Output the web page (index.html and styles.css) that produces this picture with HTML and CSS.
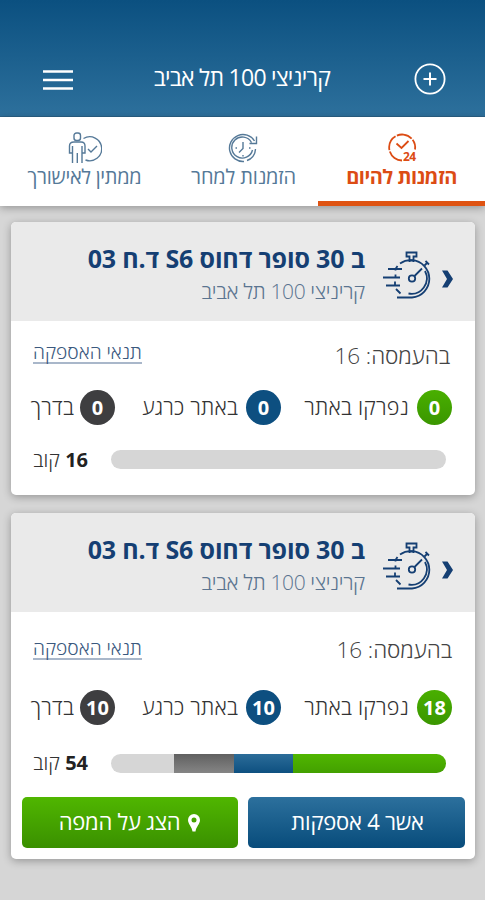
FILE: index.html
```html
<!DOCTYPE html>
<html lang="he" dir="rtl">
<head>
<meta charset="utf-8">
<title>קריניצי 100 תל אביב</title>
<link rel="stylesheet" href="styles.css">
</head>
<body>
<svg class="defs" width="0" height="0" aria-hidden="true">
  <symbol id="stopwatch" viewBox="0 0 50 48">
    <g fill="none" stroke="currentColor" stroke-width="1.8">
      <path d="M23.500 1.500h10v4h-3v4h-4v-4h-3zM26.500 9v2M30.500 9v2"/>
      <path d="M17 12.500A19.300 19.300 0 0 1 29 9.200 18.700 18.700 0 0 1 29 46.500H14M14.500 15l-2 3M13 38l4.500 4.500"/>
      <path d="M42 20A15.500 15.500 0 0 1 25.500 42.500"/>
      <path d="M42.500 10l3.500 3.500M41.500 14.500l3-3"/>
      <circle cx="29" cy="27.500" r="3.200"/>
      <path d="M31.500 25l7.500-7.500"/>
      <path d="M5 18h14M0 26.500h17M3 34.500h14M12.500 18v1.500M12.500 23.500v3M12 30.500v4"/>
    </g>
  </symbol>
</svg>
<header class="top">
  <svg class="add" width="32" height="32" viewBox="0 0 32 32" fill="none" stroke="#fff"><circle cx="16" cy="16" r="14.600" stroke-width="1.800"/><path d="M16 9.500v13M9.500 16h13" stroke-width="2"/></svg>
  <h1 class="top-title"><span>קריניצי 100 תל אביב</span></h1>
  <svg class="menu" width="30" height="22" viewBox="0 0 30 22"><path d="M0 3.500h30M0 12h30M0 20.500h30" stroke="#fff" stroke-width="2.400"/></svg>
</header>
<nav class="tabs">
  <a class="tab tab-today">
    <svg width="30" height="30" viewBox="0 0 30 30" fill="none" stroke="currentColor" stroke-width="1.800"><path d="M15 27.500A13 13 0 1 1 28 16.500" stroke-dasharray="16 1.500"/><path d="M9.500 10.500l5 4.500 7-7"/><text class="icon-text" x="16" y="27.500" direction="ltr" stroke="none" fill="currentColor">24</text></svg>
    <span>הזמנות להיום</span>
  </a>
  <a class="tab tab-tomorrow">
    <svg width="30" height="30" viewBox="0 0 30 30" fill="none" stroke="currentColor" stroke-width="1.400"><path d="M26.500 8A13.500 13.500 0 1 0 16 28.500M23.500 9.500A10.500 10.500 0 1 0 24.500 17M27.500 16A13 13 0 0 1 19 27.500M21.500 10.500h7V3.500"/><path d="M15 9v6.500l-4 4M7.500 15h1.500M15 22v1.500M21 15h1.500"/></svg>
    <span>הזמנות למחר</span>
  </a>
  <a class="tab tab-wait">
    <svg width="34" height="32" viewBox="0 0 34 32" fill="none" stroke="currentColor" stroke-width="1.400"><rect x="6" y="1" width="6.500" height="7.500" rx="2.500"/><path d="M4 21H1.500v-7c0-3 2-4 4.500-4h7c2.500 0 4 1 4 4v7h-3M4.500 14v17M9.300 21v10M14 14v17"/><path d="M15.500 6.500A12 12 0 1 1 17.500 28M20 17l3 3 6-6"/></svg>
    <span>ממתין לאישורך</span>
  </a>
</nav>
<main class="orders">
  <section class="card">
    <div class="card-head">
      <svg class="chevron" width="11" height="18" viewBox="0 0 11 18"><path d="M0 .5h5.500L11 9l-5.500 8.500H0L5 9z" fill="currentColor"/></svg>
      <svg class="watch" width="50" height="48"><use href="#stopwatch"/></svg>
      <div class="names"><h2><span>ב 30 סופר דחוס S6 ד.ח 03</span></h2><p><span>קריניצי 100 תל אביב</span></p></div>
    </div>
    <div class="info"><span class="load">בהעמסה: 16</span><a class="terms">תנאי האספקה</a></div>
    <div class="stats">
      <b class="dot green">0</b><span class="s1">נפרקו באתר</span>
      <b class="dot blue">0</b><span class="s2">באתר כרגע</span>
      <b class="dot gray">0</b><span class="s3">בדרך</span>
    </div>
    <div class="progress"><div class="bar"></div><span class="amount"><b>16</b> קוב</span></div>
  </section>
  <section class="card card-active">
    <div class="card-head">
      <svg class="chevron" width="11" height="18" viewBox="0 0 11 18"><path d="M0 .5h5.500L11 9l-5.500 8.500H0L5 9z" fill="currentColor"/></svg>
      <svg class="watch" width="50" height="48"><use href="#stopwatch"/></svg>
      <div class="names"><h2><span>ב 30 סופר דחוס S6 ד.ח 03</span></h2><p><span>קריניצי 100 תל אביב</span></p></div>
    </div>
    <div class="info"><span class="load">בהעמסה: 16</span><a class="terms">תנאי האספקה</a></div>
    <div class="stats">
      <b class="dot green">18</b><span class="s1">נפרקו באתר</span>
      <b class="dot blue">10</b><span class="s2">באתר כרגע</span>
      <b class="dot gray">10</b><span class="s3">בדרך</span>
    </div>
    <div class="progress"><div class="bar"><i class="green" style="width:153px"></i><i class="blue" style="width:59px"></i><i class="gray" style="width:60px"></i></div><span class="amount"><b>54</b> קוב</span></div>
    <div class="actions">
      <button class="btn approve"><span>אשר 4 אספקות</span></button>
      <button class="btn map"><svg width="12" height="18" viewBox="0 0 12 18"><path fill="#fff" fill-rule="evenodd" d="M6 0a6 6 0 0 1 6 6c0 4-4 7-4.500 11.500h-3C4 13 0 10 0 6a6 6 0 0 1 6-6zm0 3.500a2.500 2.500 0 1 0 0 5 2.500 2.500 0 0 0 0-5z"/></svg><span>הצג על המפה</span></button>
    </div>
  </section>
</main>
</body>
</html>
```
FILE: styles.css
```css
* { box-sizing: border-box; }
body { margin: 0; height: 900px; overflow: hidden; background: #d6d6d6; font-family: "Open Sans", "Noto Sans", sans-serif; color: #444; }
h1, h2, p { margin: 0; }
span, a { white-space: nowrap; }
.defs { display: block; height: 0; }
.top { height: 117px; padding: 42px 39px 0 43px; display: flex; justify-content: space-between; align-items: center; background: linear-gradient(#0b5080, #2d709c); border-bottom: 1px solid #2a6187; color: #fff; }
.top svg { flex: none; }
.top-title { font-size: 23px; line-height: 30px; font-weight: 400; margin: -5px 0 0 -1px; letter-spacing: -.75px; padding-right: 2px; }
.tabs { height: 89px; display: grid; grid-template-columns: 167px 151px 167px; background: #fff; color: #557998; box-shadow: 0 2px 8px rgba(0,0,0,.3); }
.tab { display: flex; flex-direction: column; align-items: center; padding-top: 15px; font-size: 20px; line-height: 26px; }
.tab svg { height: 32px; flex: none; }
.tab-today { color: #dc4c14; font-weight: 700; letter-spacing: -.5px; border-bottom: 5px solid #df5312; }
.tab-tomorrow { letter-spacing: -.15px; padding-left: 1px; }
.tab-tomorrow span { margin-left: 1px; }
.tab-wait { letter-spacing: -.3px; padding-left: 2px; }
.icon-text { font: 700 12px "Open Sans", sans-serif; letter-spacing: -.5px; }
.orders { padding: 16px 10px 0 11px; }
.card { height: 273px; background: #fff; border-radius: 5px; overflow: hidden; box-shadow: 0 2px 8px rgba(0,0,0,.3); margin-bottom: 18px; }
.card-active { height: 346px; }
.card-head { height: 99px; padding: 22px 22px 0 0; display: flex; background: #eaeaea; color: #153f73; }
.chevron { margin-top: 26px; flex: none; }
.watch { margin: 7px 9px 0 18px; flex: none; }
h2 { font-size: 25px; line-height: 28px; font-weight: 700; letter-spacing: -.15px; }
.names p { font-size: 21px; line-height: 26px; margin-top: 6px; color: #5a7490; font-weight: 330; letter-spacing: -.36px; }
.info { height: 68px; padding: 20px 25px 0 22px; display: flex; justify-content: space-between; }
.load { font-size: 22.500px; line-height: 30px; font-weight: 330; letter-spacing: -.05px; }
.terms { font-size: 19.200px; line-height: 23px; height: 24px; margin-top: -1px; color: #3b597e; border-bottom: 2px solid #a9b7ca; font-weight: 300; }
.stats { height: 36px; padding-right: 23px; display: flex; align-items: center; font-size: 21.500px; font-weight: 300; color: #333; letter-spacing: .2px; }
.stats span { margin-top: -1px; }
.dot { width: 35px; height: 35px; border-radius: 50%; color: #fff; display: grid; place-items: center; font-size: 20px; font-weight: 700; flex: none; letter-spacing: 0; }
.dot.green { background: linear-gradient(#49af00, #3a9600); }
.dot.blue { background: #0d4f80; }
.dot.gray { background: #3e3e40; }
.s1 { width: 136px; padding-right: 8px; }
.s2 { width: 131px; padding-right: 8px; }
.s3 { padding-right: 6px; }
.progress { display: flex; align-items: center; padding: 25px 29px 0 0; height: 44px; }
.bar { width: 335px; height: 19px; border-radius: 10px; overflow: hidden; background: #d6d6d6; display: flex; flex: none; }
.bar i { display: block; }
.bar .green { background: linear-gradient(#50b600, #43a000); }
.bar .blue { background: linear-gradient(#2b6c99, #0e5080); }
.bar .gray { background: linear-gradient(#606060, #858585); }
.amount { font-size: 20px; line-height: 24px; margin-right: 23px; font-weight: 300; color: #333; }
.amount b { font-weight: 700; color: #222; }
.card-active .info { height: 77px; padding: 23px 23px 0 22px; }
.card-active .terms { margin-top: 1px; }
.card-active .progress { height: 48px; padding-top: 28px; }
.actions { display: grid; grid-template-columns: 217px 216px; gap: 10px; margin: 24px 10px 0 11px; }
.btn { height: 51px; border: 0; border-radius: 5px; padding: 0; color: #fff; font: 400 22px/30px "Open Sans", "Noto Sans", sans-serif; letter-spacing: -.25px; display: flex; justify-content: center; align-items: center; }
.btn span { margin-top: -4px; }
.approve span { margin-left: 2px; }
.btn svg { margin-left: 8px; }
.map { padding-right: 1px; background: linear-gradient(#50b600, #3a9000); }
.approve { background: linear-gradient(#2c709d, #084c7b); }
```
